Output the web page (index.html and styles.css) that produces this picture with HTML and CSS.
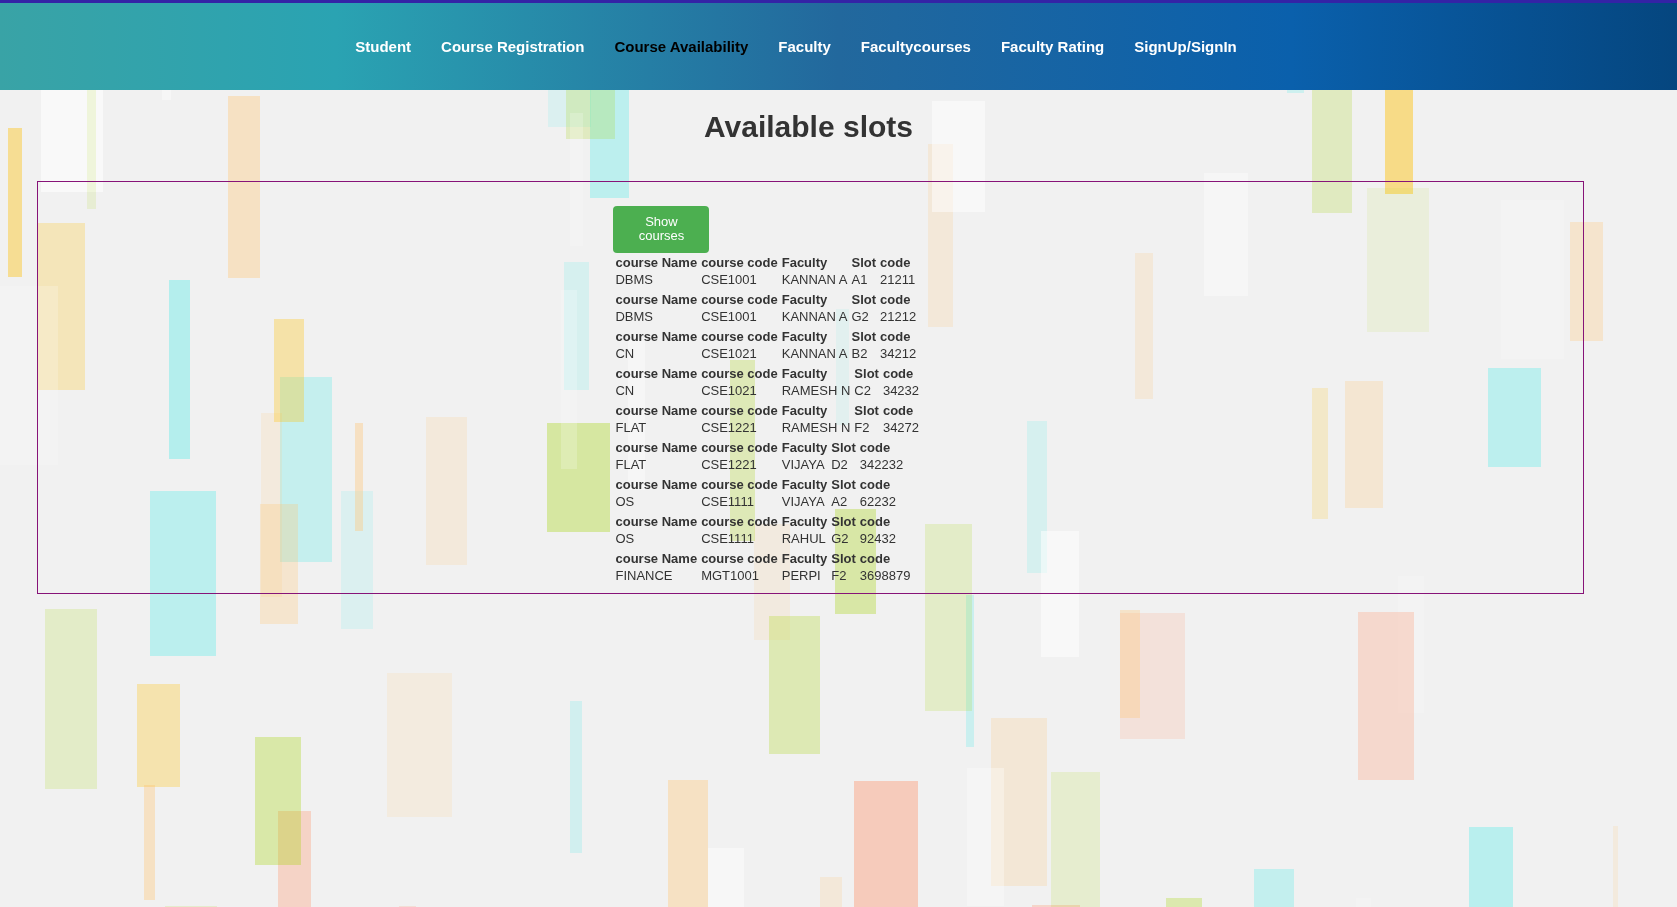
FILE: index.html
```html
<!DOCTYPE html>
<html lang="en">
<head>
<meta charset="utf-8">
<meta name="viewport" content="width=device-width, initial-scale=1">
<title>Available slots</title>
<link rel="stylesheet" href="styles.css">
</head>
<body>
<svg class="backdrop" viewBox="0 0 1677 907" preserveAspectRatio="xMidYMid slice" aria-hidden="true">
  <g class="cyan">
    <rect x="169" y="280" width="21" height="179" fill-opacity=".25"/>
    <rect x="548" y="80" width="43" height="47" fill-opacity=".09"/>
    <rect x="590" y="80" width="39" height="118" fill-opacity=".22"/>
    <rect x="564" y="262" width="25" height="128" fill-opacity=".11"/>
    <rect x="1287" y="80" width="17" height="13" fill-opacity=".15"/>
    <rect x="1488" y="368" width="53" height="99" fill-opacity=".22"/>
    <rect x="280" y="377" width="52" height="185" fill-opacity=".18"/>
    <rect x="150" y="491" width="66" height="165" fill-opacity=".225"/>
    <rect x="341" y="491" width="32" height="138" fill-opacity=".09"/>
    <rect x="836" y="309" width="13" height="116" fill-opacity=".06"/>
    <rect x="1027" y="421" width="20" height="152" fill-opacity=".11"/>
    <rect x="966" y="595" width="8" height="152" fill-opacity=".16"/>
    <rect x="570" y="701" width="12" height="152" fill-opacity=".13"/>
    <rect x="1254" y="869" width="40" height="50" fill-opacity=".19"/>
    <rect x="1469" y="827" width="44" height="90" fill-opacity=".23"/>
  </g>
  <g class="coral">
    <rect x="278" y="811" width="33" height="110" fill-opacity=".32"/>
    <rect x="399" y="906" width="17" height="10" fill-opacity=".2"/>
    <rect x="854" y="781" width="64" height="140" fill-opacity=".4"/>
    <rect x="1032" y="905" width="48" height="20" fill-opacity=".3"/>
    <rect x="1120" y="613" width="65" height="126" fill-opacity=".17"/>
  </g>
  <g class="orange">
    <rect x="228" y="96" width="32" height="182" fill-opacity=".35"/>
    <rect x="928" y="144" width="25" height="183" fill-opacity=".18"/>
    <rect x="1570" y="222" width="33" height="119" fill-opacity=".28"/>
    <rect x="1135" y="253" width="18" height="146" fill-opacity=".18"/>
    <rect x="1345" y="381" width="38" height="127" fill-opacity=".23"/>
    <rect x="261" y="413" width="21" height="184" fill-opacity=".15"/>
    <rect x="260" y="504" width="38" height="120" fill-opacity=".27"/>
    <rect x="355" y="423" width="8" height="108" fill-opacity=".36"/>
    <rect x="426" y="417" width="41" height="148" fill-opacity=".17"/>
    <rect x="754" y="524" width="36" height="116" fill-opacity=".13"/>
    <rect x="387" y="673" width="65" height="144" fill-opacity=".14"/>
    <rect x="668" y="780" width="40" height="140" fill-opacity=".35"/>
    <rect x="820" y="877" width="22" height="40" fill-opacity=".18"/>
    <rect x="991" y="718" width="56" height="168" fill-opacity=".2"/>
    <rect x="1120" y="610" width="20" height="108" fill-opacity=".3"/>
    <rect x="1613" y="826" width="5" height="90" fill-opacity=".15"/>
  </g>
  <g class="lime">
    <rect x="566" y="80" width="49" height="59" fill-opacity=".2"/>
    <rect x="1312" y="80" width="40" height="133" fill-opacity=".2"/>
    <rect x="547" y="423" width="63" height="109" fill-opacity=".33"/>
    <rect x="730" y="360" width="25" height="181" fill-opacity=".24"/>
    <rect x="925" y="524" width="47" height="187" fill-opacity=".17"/>
    <rect x="835" y="509" width="41" height="105" fill-opacity=".31"/>
    <rect x="45" y="609" width="52" height="180" fill-opacity=".17"/>
    <rect x="255" y="737" width="46" height="128" fill-opacity=".3"/>
    <rect x="165" y="906" width="52" height="10" fill-opacity=".15"/>
    <rect x="769" y="616" width="51" height="138" fill-opacity=".25"/>
    <rect x="1051" y="772" width="49" height="140" fill-opacity=".14"/>
    <rect x="1166" y="898" width="36" height="20" fill-opacity=".28"/>
  </g>
  <g class="yellow">
    <rect x="8" y="128" width="14" height="149" fill-opacity=".39"/>
    <rect x="37" y="223" width="48" height="167" fill-opacity=".23"/>
    <rect x="1385" y="80" width="28" height="114" fill-opacity=".44"/>
    <rect x="1312" y="388" width="16" height="131" fill-opacity=".17"/>
    <rect x="274" y="319" width="30" height="103" fill-opacity=".3"/>
    <rect x="137" y="684" width="43" height="103" fill-opacity=".28"/>
  </g>
  <g class="orange">
    <rect x="144" y="785" width="11" height="115" fill-opacity=".35"/>
  </g>
  <g class="white">
    <rect x="41" y="80" width="62" height="112" fill-opacity=".57"/>
    <rect x="162" y="80" width="9" height="20" fill-opacity=".4"/>
    <rect x="0" y="286" width="58" height="179" fill-opacity=".2"/>
    <rect x="570" y="113" width="13" height="133" fill-opacity=".2"/>
    <rect x="932" y="101" width="53" height="111" fill-opacity=".5"/>
    <rect x="561" y="290" width="16" height="179" fill-opacity=".2"/>
    <rect x="628" y="340" width="17" height="150" fill-opacity=".4"/>
    <rect x="1204" y="173" width="44" height="123" fill-opacity=".36"/>
    <rect x="1501" y="200" width="63" height="159" fill-opacity=".16"/>
    <rect x="1398" y="576" width="26" height="137" fill-opacity=".16"/>
    <rect x="1041" y="531" width="38" height="126" fill-opacity=".5"/>
    <rect x="708" y="848" width="36" height="70" fill-opacity=".43"/>
    <rect x="967" y="768" width="37" height="138" fill-opacity=".3"/>
    <rect x="1356" y="898" width="15" height="20" fill-opacity=".2"/>
  </g>
  <g class="lime">
    <rect x="87" y="80" width="9" height="129" fill-opacity=".12"/>
    <rect x="1367" y="188" width="62" height="144" fill-opacity=".09"/>
  </g>
  <g class="coral">
    <rect x="1358" y="612" width="56" height="168" fill-opacity=".27"/>
  </g>
</svg>

<header class="site-header">
  <nav aria-label="Main">
    <ul class="menu">
      <li><a class="menu-link" href="#student">Student</a></li>
      <li><a class="menu-link" href="#registration">Course Registration</a></li>
      <li><a class="menu-link active" href="#availability" aria-current="page">Course Availability</a></li>
      <li><a class="menu-link" href="#faculty">Faculty</a></li>
      <li><a class="menu-link" href="#facultycourses">Facultycourses</a></li>
      <li><a class="menu-link" href="#rating">Faculty Rating</a></li>
      <li><a class="menu-link" href="#sign">SignUp/SignIn</a></li>
    </ul>
  </nav>
</header>

<main class="content">
  <h1 class="title">Available slots</h1>
  <section class="panel">
    <button class="show-button" type="button">Show courses</button>
    <table class="course"><tr><th>course Name</th><th>course code</th><th>Faculty</th><th>Slot</th><th>code</th></tr><tr><td>DBMS</td><td>CSE1001</td><td>KANNAN A</td><td>A1</td><td>21211</td></tr></table>
    <table class="course"><tr><th>course Name</th><th>course code</th><th>Faculty</th><th>Slot</th><th>code</th></tr><tr><td>DBMS</td><td>CSE1001</td><td>KANNAN A</td><td>G2</td><td>21212</td></tr></table>
    <table class="course"><tr><th>course Name</th><th>course code</th><th>Faculty</th><th>Slot</th><th>code</th></tr><tr><td>CN</td><td>CSE1021</td><td>KANNAN A</td><td>B2</td><td>34212</td></tr></table>
    <table class="course"><tr><th>course Name</th><th>course code</th><th>Faculty</th><th>Slot</th><th>code</th></tr><tr><td>CN</td><td>CSE1021</td><td>RAMESH N</td><td>C2</td><td>34232</td></tr></table>
    <table class="course"><tr><th>course Name</th><th>course code</th><th>Faculty</th><th>Slot</th><th>code</th></tr><tr><td>FLAT</td><td>CSE1221</td><td>RAMESH N</td><td>F2</td><td>34272</td></tr></table>
    <table class="course"><tr><th>course Name</th><th>course code</th><th>Faculty</th><th>Slot</th><th>code</th></tr><tr><td>FLAT</td><td>CSE1221</td><td>VIJAYA</td><td>D2</td><td>342232</td></tr></table>
    <table class="course"><tr><th>course Name</th><th>course code</th><th>Faculty</th><th>Slot</th><th>code</th></tr><tr><td>OS</td><td>CSE1111</td><td>VIJAYA</td><td>A2</td><td>62232</td></tr></table>
    <table class="course"><tr><th>course Name</th><th>course code</th><th>Faculty</th><th>Slot</th><th>code</th></tr><tr><td>OS</td><td>CSE1111</td><td>RAHUL</td><td>G2</td><td>92432</td></tr></table>
    <table class="course"><tr><th>course Name</th><th>course code</th><th>Faculty</th><th>Slot</th><th>code</th></tr><tr><td>FINANCE</td><td>MGT1001</td><td>PERPI</td><td>F2</td><td>3698879</td></tr></table>
  </section>
</main>
</body>
</html>
```

FILE: styles.css
```css
* {
  box-sizing: border-box;
}

body {
  margin: 0;
  min-height: 100vh;
  background: #f1f1f1;
  color: #333;
  font-family: "Liberation Sans", Arial, sans-serif;
  font-size: 13px;
}

.backdrop {
  position: fixed;
  inset: 0;
  z-index: -1;
  width: 100%;
  height: 100%;
}

.cyan { fill: #00e9e5; }
.coral { fill: #ff946c; }
.orange { fill: #ffc36e; }
.lime { fill: #a2d300; }
.yellow { fill: #ffbf00; }
.white { fill: #fff; }

.site-header {
  padding: 33px 85px 32px 0;
  border-top: 3px solid #3423a6;
  background: linear-gradient(90deg, #39a3a6 0%, #2aa3b2 20%, #22689d 50%, #0a60ac 77%, #05467f 100%) padding-box;
}

.menu {
  display: flex;
  flex-wrap: wrap;
  justify-content: center;
  gap: 0 30px;
  margin: 0;
  padding: 0;
  list-style: none;
}

.menu-link {
  display: block;
  color: #fff;
  font-size: 15px;
  font-weight: bold;
  line-height: 22px;
  text-decoration: none;
}

.menu-link.active {
  color: #000;
}

.content {
  padding: 20px 93px 20px 37px;
}

.title {
  margin: 0 0 38px;
  padding-right: 4px;
  font-size: 30px;
  line-height: 33px;
  text-align: center;
}

.panel {
  padding: 24px 0 7px 37.2%;
  border: 1px solid #871378;
}

.show-button {
  display: block;
  width: 96px;
  padding: 9px 16px 10px;
  border: 0;
  border-radius: 4px;
  background: #4caf50;
  color: #fff;
  font-family: inherit;
  font-size: 13px;
  line-height: 14px;
}

.course {
  border-spacing: 2px;
}

.course th {
  padding: 1px 2px 1px 0;
  line-height: 14px;
  text-align: left;
}

.course td {
  padding: 0 2px 2px 0;
  line-height: 13px;
}
```
